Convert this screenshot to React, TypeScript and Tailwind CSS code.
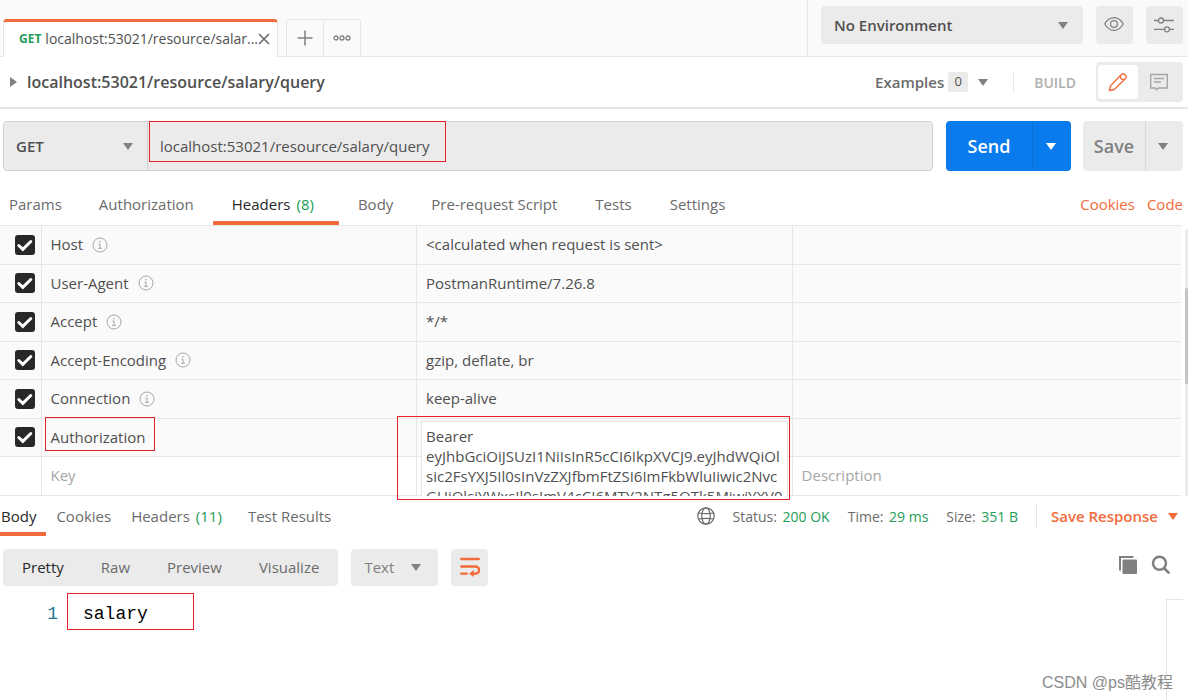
import React from 'react';
import clsx from 'clsx';

const URL = 'localhost:53021/resource/salary/query';
const TAB_TITLE = 'localhost:53021/resource/salar...';

const TOKEN =
  'Bearer eyJhbGciOiJSUzI1NiIsInR5cCI6IkpXVCJ9.eyJhdWQiOlsic2FsYXJ5Il0sInVzZXJfbmFtZSI6ImFkbWluIiwic2NvcGUiOlsiYWxsIl0sImV4cCI6MTY2NTg5OTk5MiwiYXV0';

const requestTabs = [
  { label: 'Params' },
  { label: 'Authorization' },
  { label: 'Headers', count: 8 },
  { label: 'Body' },
  { label: 'Pre-request Script' },
  { label: 'Tests' },
  { label: 'Settings' },
];

const responseTabs = [
  { label: 'Body' },
  { label: 'Cookies' },
  { label: 'Headers', count: 11 },
  { label: 'Test Results' },
];

const headers = [
  { key: 'Host', value: '<calculated when request is sent>', auto: true },
  { key: 'User-Agent', value: 'PostmanRuntime/7.26.8', auto: true },
  { key: 'Accept', value: '*/*', auto: true },
  { key: 'Accept-Encoding', value: 'gzip, deflate, br', auto: true },
  { key: 'Connection', value: 'keep-alive', auto: true },
  { key: 'Authorization', value: TOKEN, auto: false },
];

const stats = [
  { label: 'Status:', value: '200 OK' },
  { label: 'Time:', value: '29 ms' },
  { label: 'Size:', value: '351 B' },
];

const Caret: React.FC<{ className?: string }> = ({ className }) => (
  <svg viewBox="0 0 10 7" className={clsx('h-[7px] w-2.5 shrink-0 fill-current', className)} aria-hidden="true">
    <path d="M0 0h10L5 7z" />
  </svg>
);

// Red frame drawn over the parts worth looking at
const Mark: React.FC<{ className: string }> = ({ className }) => (
  <div className={clsx('pointer-events-none absolute border border-[#e8202a]', className)} />
);

const InfoIcon = () => (
  <svg viewBox="0 0 16 16" className="size-4 fill-none stroke-[#a6a6a6]" aria-hidden="true">
    <circle cx="8" cy="8" r="7" />
    <path d="M6.5 7H8v4M6 11.3h4" />
    <path d="M7.3 4.6h1.4" strokeWidth="1.4" />
  </svg>
);

const TopBar = () => (
  <header className="flex h-[57px] border-b border-[#e6e6e6] bg-[#fafafa]">
    <div className="flex min-w-0 flex-1 items-end pl-[3px]">
      <div className="-mb-px flex h-[38px] w-[275px] items-center rounded-t border-x border-t-3 border-x-[#e6e6e6] border-t-[#f26b3a] bg-white pr-[7px] pb-0.5 pl-[15px]">
        <span className="mr-1 text-[12px] font-bold text-[#249d57]">GET</span>
        <span className="min-w-0 flex-1 text-[14px] whitespace-nowrap text-[#505050]">{TAB_TITLE}</span>
        <button type="button" aria-label="Close tab">
          <svg viewBox="0 0 12 12" className="size-3 fill-none stroke-[#6b6b6b]" strokeWidth="1.6">
            <path d="M1 1l10 10M11 1L1 11" />
          </svg>
        </button>
      </div>
      <div className="ml-2 flex h-[37px] rounded-t border border-b-0 border-[#e6e6e6]">
        <button type="button" aria-label="New tab" className="flex w-[37px] items-center justify-center border-r border-[#e6e6e6]">
          <svg viewBox="0 0 16 16" className="size-4 fill-none stroke-[#808080]" strokeWidth="1.5">
            <path d="M8 .5v15M.5 8h15" />
          </svg>
        </button>
        <button type="button" aria-label="Tab options" className="flex w-9 items-center justify-center">
          <svg viewBox="0 0 18 6" className="h-1.5 w-[18px] fill-none stroke-[#808080]" strokeWidth="1.3">
            <circle cx="3" cy="3" r="2" />
            <circle cx="9" cy="3" r="2" />
            <circle cx="15" cy="3" r="2" />
          </svg>
        </button>
      </div>
    </div>
    <div className="flex gap-[13px] border-l border-[#e6e6e6] pt-1.5 pr-[5px] pl-[13px]">
      <div className="relative h-[38px] w-[262px]">
        <select
          aria-label="Environment"
          className="h-full w-full appearance-none rounded bg-[#ebebeb] pl-[13px] text-[15px] font-semibold text-[#505050]"
        >
          <option>No Environment</option>
        </select>
        <Caret className="pointer-events-none absolute top-4 right-[15px] text-[#808080]" />
      </div>
      <button type="button" aria-label="Environment quick look" className="flex h-[38px] w-[37px] items-center justify-center rounded bg-[#ebebeb] pr-px pb-0.5">
        <svg viewBox="0 0 20 14" className="h-3.5 w-5 fill-none stroke-[#808080]" strokeWidth="1.2">
          <path d="M.7 7C3 3 6.2.7 10 .7S17 3 19.3 7C17 11 13.8 13.3 10 13.3S3 11 .7 7z" />
          <circle cx="10" cy="7" r="3.4" />
        </svg>
      </button>
      <button type="button" aria-label="Manage environments" className="flex h-[38px] w-[37px] items-center justify-center rounded bg-[#ebebeb] pr-px">
        <svg viewBox="0 0 20 16" className="h-4 w-5 fill-none stroke-[#808080]" strokeWidth="1.3">
          <path d="M0 3.5h4.5M9.5 3.5H20M0 12.3h10.5M15.5 12.3H20" />
          <circle cx="7" cy="3.5" r="2.5" />
          <circle cx="13" cy="12.3" r="2.5" />
        </svg>
      </button>
    </div>
  </header>
);

const TitleRow = () => (
  <div className="flex h-[52px] items-center border-b-2 border-[#e6e6e6] pr-[5px] pl-2.5">
    <button type="button" aria-label="Expand description">
      <svg viewBox="0 0 7 10" className="h-2.5 w-[7px] fill-[#808080]">
        <path d="M0 0l7 5-7 5z" />
      </svg>
    </button>
    <h1 className="ml-2.5 flex-1 text-[16px] font-semibold text-[#505050]">{URL}</h1>
    <button type="button" className="flex items-center text-[15px] font-semibold text-[#6b6b6b]">
      Examples
      <span className="mr-2.5 ml-1 flex h-5 w-5 items-center justify-center rounded-xs bg-[#ebebeb] text-[13px] font-normal text-[#505050]">
        0
      </span>
      <Caret className="text-[#808080]" />
    </button>
    <div className="mr-5 ml-[25px] h-5 w-px bg-[#e6e6e6]" />
    <span className="text-[14px] font-semibold text-[#b0b0b0]">BUILD</span>
    <div className="ml-5 flex h-10 w-[87px] rounded bg-[#ebebeb] px-0.5 py-[3px]">
      <button type="button" aria-label="Edit" className="flex w-10 items-center justify-center rounded bg-white">
        <svg viewBox="0 0 20 20" className="size-5 fill-none stroke-[#f26b3a]" strokeWidth="1.4" strokeLinejoin="round">
          <path d="M1.5 18.5l.9-4.6L13.2 2.700q1.800-1.800 3.700 0l.4.4q1.800 1.800 0 3.700L6.200 17.500z" />
          <path d="M12.400 3.600q-.6 3.600 4 4" />
        </svg>
      </button>
      <button type="button" aria-label="Comments" className="flex flex-1 items-center justify-center pr-px">
        <svg viewBox="0 0 20 18" className="h-[18px] w-5 fill-none stroke-[#a6a6a6]" strokeWidth="1.4">
          <path d="M1.7 1.5h16.6V15H9.5l-1.7 1.7L6 15H1.7z" />
          <path d="M5 5.5h10M5 9h7" />
        </svg>
      </button>
    </div>
  </div>
);

const UrlBar = () => (
  <form className="flex pt-3 pr-[5px] pl-[3px]" onSubmit={(e) => e.preventDefault()}>
    <div className="relative flex h-[50px] min-w-0 flex-1 rounded border border-[#cfcfcf] bg-[#ebebeb]">
      <div className="relative w-36 shrink-0 border-r border-[#cfcfcf]">
        <select aria-label="Method" className="h-full w-full appearance-none pl-3 text-[15px] font-semibold text-[#505050]">
          <option>GET</option>
        </select>
        <Caret className="pointer-events-none absolute top-[21px] right-3.5 text-[#808080]" />
      </div>
      <input aria-label="Request URL" defaultValue={URL} className="min-w-0 flex-1 px-3 text-[15px] text-[#505050] outline-none" />
      <Mark className="-top-px left-[145px] h-[41px] w-[297px]" />
    </div>
    <div className="ml-[13px] flex rounded bg-[#097bed] text-white">
      <button type="submit" className="w-[86px] text-[18px] font-semibold">
        Send
      </button>
      <button type="button" aria-label="Send options" className="flex w-[39px] items-center justify-center border-l border-[#0a6fd5] pr-0.5">
        <Caret />
      </button>
    </div>
    <div className="ml-3 flex rounded bg-[#ebebeb] text-[#808080]">
      <button type="button" className="w-[62px] text-[18px] font-semibold">
        Save
      </button>
      <button type="button" aria-label="Save options" className="flex w-[38px] items-center justify-center border-l border-[#d9d9d9] pr-[3px]">
        <Caret />
      </button>
    </div>
  </form>
);

const RequestTabs = () => (
  <nav className="flex h-[54px] items-end pr-[5px] text-[15px] text-[#6b6b6b]">
    {requestTabs.map((tab, index) => (
      <button
        key={tab.label}
        type="button"
        className={clsx(
          'h-[41px] border-b-4 pt-[3px] whitespace-nowrap',
          index === 0 ? 'pr-[18px] pl-[9px]' : 'px-[19px]',
          tab.label === 'Headers' ? 'border-[#f26b3a] text-[#282828]' : 'border-transparent',
        )}
      >
        {tab.label}
        {tab.count && <span className="mr-1.5 ml-1.5 text-[#249d57]">({tab.count})</span>}
      </button>
    ))}
    <div className="ml-auto flex h-[41px] items-center gap-3 pb-px text-[#f26b3a]">
      <a href="#cookies">Cookies</a>
      <a href="#code">Code</a>
    </div>
  </nav>
);

const HeadersTable = () => (
  <section className="flex">
    <table className="mr-1 flex-1 table-fixed border-collapse text-[15px] text-[#505050]">
      <colgroup>
        <col className="w-[41px]" />
        <col className="w-[31.8%]" />
        <col className="w-[31.8%]" />
        <col />
      </colgroup>
      <tbody>
        {headers.map((header) => (
          <tr key={header.key} className="border-y border-[#e6e6e6] bg-[#fafafa] odd:h-[39px] even:h-[38px]">
            <td className="border-r border-[#e6e6e6] p-0 pb-px pl-[15px]">
              <span className="relative block size-5">
                <input
                  type="checkbox"
                  defaultChecked
                  aria-label={header.key}
                  className="block size-5 appearance-none rounded-[3px] bg-[#282828]"
                />
                <svg viewBox="0 0 20 20" className="pointer-events-none absolute inset-0 fill-none stroke-white" strokeWidth="3" strokeLinecap="round">
                  <path d="M3.8 10.5l4 3.8 8-7.8" />
                </svg>
              </span>
            </td>
            <td className="relative border-r border-[#e6e6e6] p-0 pb-px pl-[9px]">
              <span className="flex items-center gap-[9px]">
                {header.key}
                {header.auto && <InfoIcon />}
              </span>
              {!header.auto && <Mark className="-top-0.5 left-[3px] h-[34px] w-[110px]" />}
            </td>
            <td className="relative border-r border-[#e6e6e6] p-0 pb-px pl-[9px]">
              {header.auto ? (
                header.value
              ) : (
                <>
                  <textarea
                    aria-label="Authorization value"
                    defaultValue={header.value}
                    className="absolute top-0.5 right-1 left-1 block h-[75px] resize-none overflow-hidden border border-b-0 border-[#e6e6e6] bg-white py-1 pl-1 text-[15px] leading-5 break-words outline-none"
                  />
                  <Mark className="-top-[3px] right-0.5 -left-5 h-[84px]" />
                </>
              )}
            </td>
            <td className="p-0" />
          </tr>
        ))}
        <tr className="h-[39px] border-y border-[#e6e6e6]">
          <td className="border-r border-[#e6e6e6] p-0" />
          <td className="border-r border-[#e6e6e6] p-0 pb-px pl-[9px]">
            <input aria-label="New header key" placeholder="Key" className="w-full outline-none placeholder:text-[#a6a6a6]" />
          </td>
          <td className="border-r border-[#e6e6e6] p-0" />
          <td className="p-0 pb-px pl-[9px]">
            <input aria-label="New header description" placeholder="Description" className="w-full outline-none placeholder:text-[#a6a6a6]" />
          </td>
        </tr>
      </tbody>
    </table>
    <div className="mt-1 w-[3px] rounded-t bg-[#ebebeb] pt-[59px]">
      <div className="h-24 rounded bg-[#c4c4c4]" />
    </div>
  </section>
);

const ResponseBar = () => (
  <div className="flex h-10 text-[15px] text-[#6b6b6b]">
    <nav className="flex">
      {responseTabs.map((tab, index) => (
        <button
          key={tab.label}
          type="button"
          className={clsx(
            'border-b-4 pt-1 pr-2.5 whitespace-nowrap',
            index === 0 ? 'border-[#f26b3a] pl-px text-[#282828]' : 'border-transparent pl-2.5',
          )}
        >
          {tab.label}
          {tab.count && <span className="mr-1.5 ml-1.5 text-[#249d57]">({tab.count})</span>}
        </button>
      ))}
    </nav>
    <div className="ml-auto flex items-center gap-[18px] text-[14px] whitespace-nowrap">
      <svg viewBox="0 0 18 18" className="size-[18px] fill-none stroke-[#6b6b6b]" strokeWidth="1.2" aria-hidden="true">
        <circle cx="9" cy="9" r="8.2" />
        <ellipse cx="9" cy="9" rx="4.2" ry="8.2" />
        <path d="M1.5 6q7.5 1.4 15 0M1.5 12q7.5-1.4 15 0" />
      </svg>
      {stats.map((stat) => (
        <span key={stat.label}>
          {stat.label} <span className="ml-0.5 text-[#249d57]">{stat.value}</span>
        </span>
      ))}
      <div className="h-6 w-px bg-[#e6e6e6]" />
      <button type="button" className="-ml-1 flex items-center gap-2.5 pr-2.5 text-[15px] font-semibold text-[#f26b3a]">
        Save Response
        <Caret />
      </button>
    </div>
  </div>
);

const ResponseToolbar = () => (
  <div className="mt-[13px] flex h-[37px] items-center gap-[13px] pr-[17px] pl-[3px] text-[15px] text-[#6b6b6b]">
    <div className="flex h-full gap-[37px] rounded bg-[#ebebeb] px-[19px]">
      {['Pretty', 'Raw', 'Preview', 'Visualize'].map((mode) => (
        <button key={mode} type="button" className={mode === 'Pretty' ? 'text-[#282828]' : ''}>
          {mode}
        </button>
      ))}
    </div>
    <div className="relative h-full w-[87px]">
      <select aria-label="Format" className="h-full w-full appearance-none rounded bg-[#ebebeb] pl-[13px] text-[#808080]">
        <option>Text</option>
      </select>
      <Caret className="pointer-events-none absolute top-[15px] right-[17px] text-[#808080]" />
    </div>
    <button type="button" aria-label="Wrap lines" className="flex h-full w-[37px] items-center justify-center rounded bg-[#ebebeb] pb-0.5">
      <svg viewBox="0 0 20 20" className="size-5 fill-none stroke-[#f26b3a]" strokeWidth="2.3" strokeLinecap="round">
        <path d="M1.2 2h17.6M1.2 9.5h14.3a3.6 3.6 0 0 1 0 7.2H13M1.2 16.7h5.6" />
        <path d="M13.8 13v7L9 16.7z" className="fill-[#f26b3a]" stroke="none" />
      </svg>
    </button>
    <div className="ml-auto flex gap-[13px] pb-[5px] text-[#808080]">
      <button type="button" aria-label="Copy response">
        <svg viewBox="0 0 20 20" className="size-5">
          <rect x="4.5" y="4.5" width="14.5" height="14.5" rx="1" className="fill-current" />
          <path d="M2 15.5V1.9h13.5" className="fill-none stroke-current" strokeWidth="2" />
        </svg>
      </button>
      <button type="button" aria-label="Search response">
        <svg viewBox="0 0 20 20" className="size-5 fill-none stroke-current" strokeWidth="2.5">
          <circle cx="8.5" cy="8.3" r="6.5" />
          <path d="M13 13l5.3 5.3" />
        </svg>
      </button>
    </div>
  </div>
);

const ResponseBody = () => (
  <div className="relative flex flex-1 pr-[5px]">
    <code className="mt-[17px] flex h-[22px] gap-[25px] font-['Liberation_Mono',monospace] text-[18px] leading-[22px]">
      <span className="w-[58px] text-right text-[#237893]">1</span>
      <span className="text-black">salary</span>
    </code>
    <Mark className="top-[7px] left-[67px] h-[37px] w-[127px]" />
    <div className="mt-[13px] ml-auto w-[17px] border-t border-l border-[#e6e6e6]" />
    <p className="absolute right-[15px] bottom-[5px] font-['Liberation_Sans','Noto_Sans_CJK_SC',sans-serif] text-[16px] leading-6 text-[#8c8c8c]">
      CSDN @ps酷教程
    </p>
  </div>
);

export default function App() {
  return (
    <div className="flex min-h-screen flex-col bg-white font-['Open_Sans',sans-serif]">
      <TopBar />
      <TitleRow />
      <UrlBar />
      <RequestTabs />
      <HeadersTable />
      <ResponseBar />
      <ResponseToolbar />
      <ResponseBody />
    </div>
  );
}
